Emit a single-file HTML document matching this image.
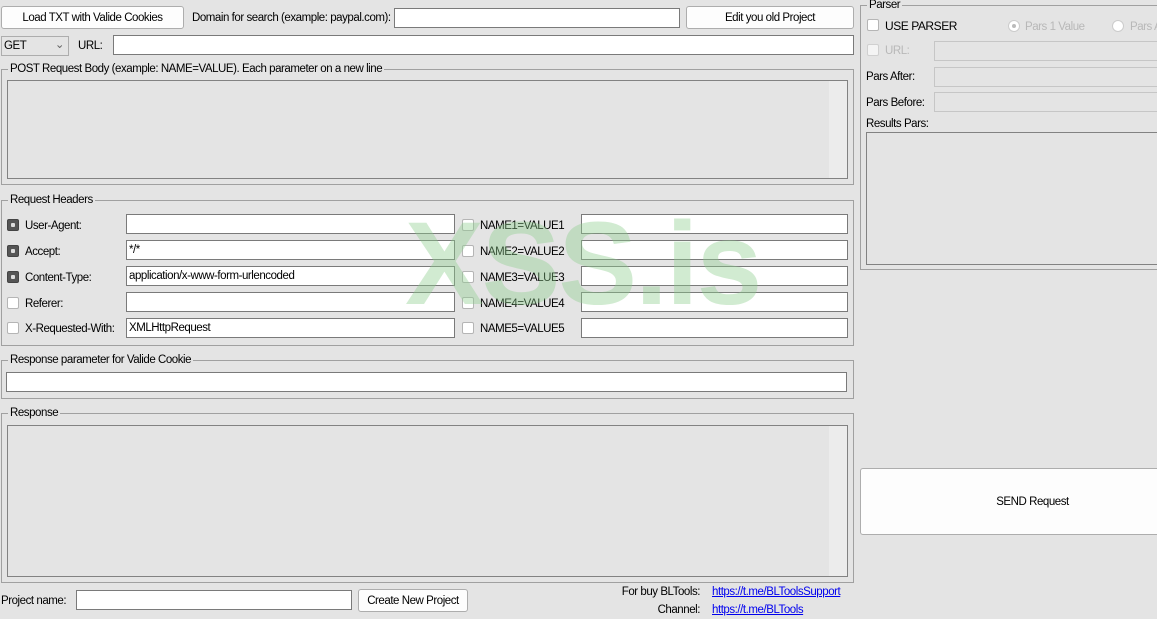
<!DOCTYPE html>
<html><head><meta charset="utf-8"><style>
*{box-sizing:border-box;margin:0;padding:0}
body{width:1157px;height:619px;background:#e4e4e4;font-family:"Liberation Sans",sans-serif;font-size:11.5px;letter-spacing:-0.45px;color:#000;position:relative;overflow:hidden}
.a{position:absolute;white-space:nowrap}
.btn{position:absolute;background:#fdfdfd;border:1px solid #adadad;border-radius:3px;display:flex;align-items:center;justify-content:center}
.in{position:absolute;background:#fff;border:1px solid #7a7a7a;height:20px;padding:2px 2px;line-height:14px}
.dis{position:absolute;background:#e4e4e4;border:1px solid #c6c6c6;height:20px}
.grp{position:absolute;border:1px solid #a0a0a0}
.grp>span{position:absolute;top:-8px;left:6px;background:#e4e4e4;padding:0 2px;line-height:14px}
.ta{position:absolute;border:1px solid #828282;background:#e4e4e4}
.ta i{position:absolute;right:0;top:0;bottom:0;width:18px;background:#ececec}
.cb{position:absolute;width:12px;height:12px;border:1px solid #b5b5b5;border-radius:2px;background:#fff}
.cb.on{background:#555;border-color:#444}
.cb.on:after{content:"";position:absolute;left:3px;top:3px;width:4px;height:4px;background:#ddd;border-radius:1px}
.lab{position:absolute;white-space:nowrap;line-height:14px}
.g{color:#b8b8b8}
a{color:#0000ee;text-decoration:underline}
</style></head><body>
<div class="btn" style="left:1px;top:6px;width:183px;height:23px">Load TXT with Valide Cookies</div>
<div class="lab" style="left:192px;top:11px">Domain for search (example: paypal.com):</div>
<div class="in" style="left:394px;top:8px;width:286px"></div>
<div class="btn" style="left:686px;top:6px;width:168px;height:23px">Edit you old Project</div>
<div class="a" style="left:1px;top:36px;width:68px;height:20px;border:1px solid #adadad;background:#e4e4e4;padding:3px 2px;line-height:13px">GET<span style="position:absolute;right:4px;top:2px;color:#666">&#8964;</span></div>
<div class="lab" style="left:78px;top:39px">URL:</div>
<div class="in" style="left:113px;top:35px;width:741px"></div>

<div class="grp" style="left:1px;top:69px;width:853px;height:116px"><span>POST Request Body (example: NAME=VALUE). Each parameter on a new line</span></div>
<div class="ta" style="left:7px;top:80px;width:841px;height:99px"><i></i></div>

<div class="grp" style="left:1px;top:200px;width:853px;height:146px"><span>Request Headers</span></div>

<div class="cb on" style="left:7px;top:219px"></div><div class="lab" style="left:25px;top:219px">User-Agent:</div><div class="in" style="left:126px;top:214px;width:329px"></div>
<div class="cb on" style="left:7px;top:245px"></div><div class="lab" style="left:25px;top:245px">Accept:</div><div class="in" style="left:126px;top:240px;width:329px">*/*</div>
<div class="cb on" style="left:7px;top:271px"></div><div class="lab" style="left:25px;top:271px">Content-Type:</div><div class="in" style="left:126px;top:266px;width:329px">application/x-www-form-urlencoded</div>
<div class="cb" style="left:7px;top:297px"></div><div class="lab" style="left:25px;top:297px">Referer:</div><div class="in" style="left:126px;top:292px;width:329px"></div>
<div class="cb" style="left:7px;top:322px"></div><div class="lab" style="left:25px;top:322px">X-Requested-With:</div><div class="in" style="left:126px;top:318px;width:329px">XMLHttpRequest</div>

<div class="cb" style="left:462px;top:219px"></div><div class="lab" style="left:480px;top:219px">NAME1=VALUE1</div><div class="in" style="left:581px;top:214px;width:267px"></div>
<div class="cb" style="left:462px;top:245px"></div><div class="lab" style="left:480px;top:245px">NAME2=VALUE2</div><div class="in" style="left:581px;top:240px;width:267px"></div>
<div class="cb" style="left:462px;top:271px"></div><div class="lab" style="left:480px;top:271px">NAME3=VALUE3</div><div class="in" style="left:581px;top:266px;width:267px"></div>
<div class="cb" style="left:462px;top:297px"></div><div class="lab" style="left:480px;top:297px">NAME4=VALUE4</div><div class="in" style="left:581px;top:292px;width:267px"></div>
<div class="cb" style="left:462px;top:322px"></div><div class="lab" style="left:480px;top:322px">NAME5=VALUE5</div><div class="in" style="left:581px;top:318px;width:267px"></div>

<div class="a" style="left:405px;top:199px;font-size:118px;font-weight:bold;color:rgba(140,205,140,0.4);letter-spacing:-2px;line-height:130px;z-index:5">XSS.is</div>

<div class="grp" style="left:1px;top:360px;width:853px;height:39px"><span>Response parameter for Valide Cookie</span></div>
<div class="in" style="left:6px;top:372px;width:841px"></div>

<div class="grp" style="left:1px;top:413px;width:853px;height:170px"><span>Response</span></div>
<div class="ta" style="left:7px;top:425px;width:841px;height:152px"><i></i></div>

<div class="lab" style="left:1px;top:594px">Project name:</div>
<div class="in" style="left:76px;top:590px;width:276px"></div>
<div class="btn" style="left:358px;top:589px;width:110px;height:23px">Create New Project</div>
<div class="lab" style="left:560px;top:585px;width:140px;text-align:right">For buy BLTools:</div>
<div class="lab" style="left:712px;top:585px"><a>https://t.me/BLToolsSupport</a></div>
<div class="lab" style="left:560px;top:603px;width:140px;text-align:right">Channel:</div>
<div class="lab" style="left:712px;top:603px"><a>https://t.me/BLTools</a></div>

<div class="grp" style="left:860px;top:5px;width:310px;height:265px"><span>Parser</span></div>
<div class="cb" style="left:867px;top:19px"></div><div class="lab" style="left:885px;top:19px;font-size:12px">USE PARSER</div>
<div class="a" style="left:1008px;top:20px;width:12px;height:12px;border-radius:50%;background:#fff;border:1px solid #ccc"><div style="position:absolute;left:3px;top:3px;width:4px;height:4px;border-radius:50%;background:#bbb"></div></div>
<div class="lab g" style="left:1025px;top:20px">Pars 1 Value</div>
<div class="a" style="left:1112px;top:20px;width:12px;height:12px;border-radius:50%;background:#fff;border:1px solid #ccc"></div>
<div class="lab g" style="left:1130px;top:20px">Pars A</div>
<div class="cb" style="left:867px;top:44px;border-color:#d0d0d0;background:#f4f4f4"></div><div class="lab g" style="left:885px;top:44px">URL:</div>
<div class="dis" style="left:934px;top:41px;width:230px"></div>
<div class="lab" style="left:866px;top:70px">Pars After:</div>
<div class="dis" style="left:934px;top:67px;width:230px"></div>
<div class="lab" style="left:866px;top:96px">Pars Before:</div>
<div class="dis" style="left:934px;top:92px;width:230px"></div>
<div class="lab" style="left:866px;top:117px">Results Pars:</div>
<div class="ta" style="left:866px;top:132px;width:300px;height:133px"></div>

<div class="btn" style="left:860px;top:468px;width:345px;height:67px">SEND Request</div>
</body></html>
